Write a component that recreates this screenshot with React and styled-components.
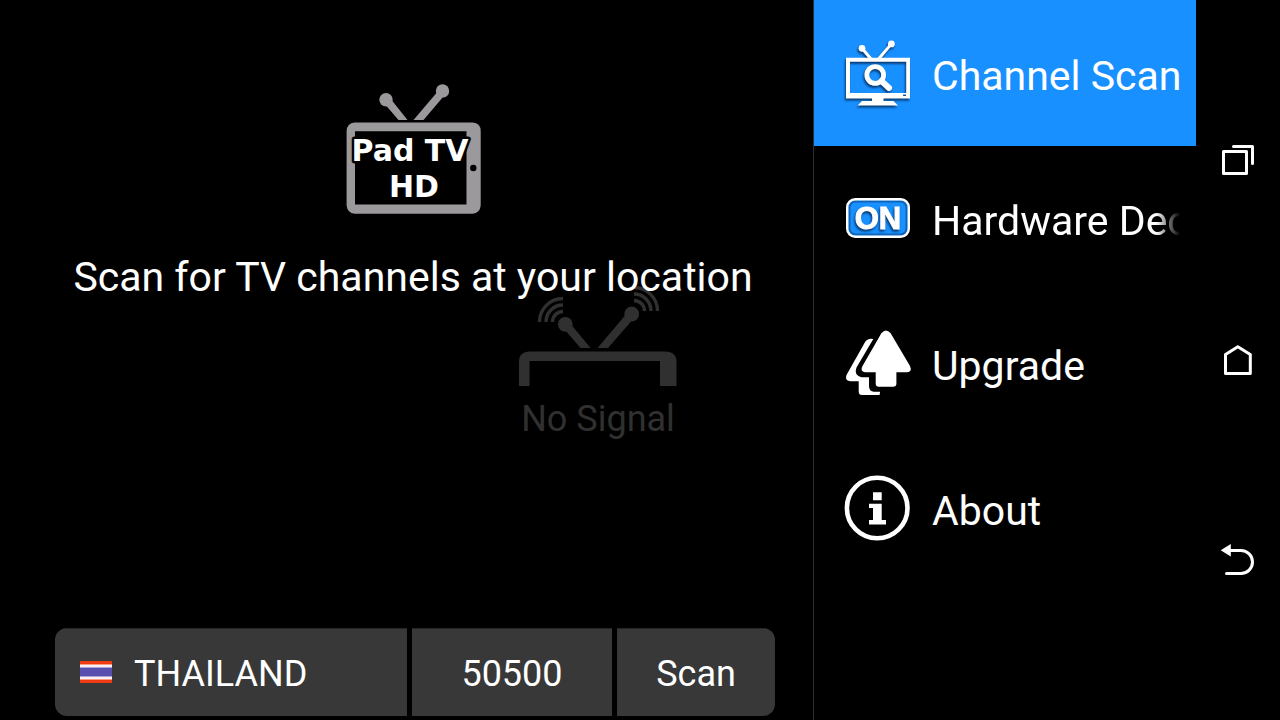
import React, { useState } from 'react';
import styled, { createGlobalStyle } from 'styled-components';

const GlobalStyle = createGlobalStyle`
    * {
        box-sizing: border-box;
    }

    body {
        margin: 0;
        background: #000;
        color: #fff;
        font-family: Roboto, 'Noto Sans', sans-serif;
    }

    button, input, select {
        margin: 0;
        border: none;
        color: inherit;
        font-family: inherit;
        outline: none;
    }
`;

const Screen = styled.div`
    display: flex;
    height: 100vh;
    overflow: hidden;
`;

const Content = styled.div`
    position: relative;
    display: flex;
    flex: 1;
    min-width: 0;
`;

const Backdrop = styled.div`
    position: absolute;
    inset: 0;
    display: flex;
    flex-direction: column;
    align-items: center;
    justify-content: center;
    gap: 12px;
    padding-top: 2px;
    color: #303030;
    font-size: 36px;
    line-height: 38px;
`;

const Main = styled.main`
    position: relative;
    display: flex;
    flex: 1;
    flex-direction: column;
    align-items: center;
    min-width: 0;
    padding: 84px 38px 4px 51px;
`;

const Title = styled.h1`
    margin: 39px 0 0;
    font-size: 41px;
    font-weight: 400;
    line-height: 48px;
    white-space: nowrap;
`;

const ScanForm = styled.form`
    display: flex;
    align-self: stretch;
    gap: 5px;
    height: 88px;
    margin: auto 0 0 4px;
    border-radius: 12px;
    overflow: hidden;
    font-size: 36px;
`;

const Country = styled.label`
    display: flex;
    flex: 1;
    align-items: center;
    gap: 22px;
    min-width: 0;
    padding: 0 25px;
    background: #383838;
    box-shadow: inset 0 1px #262626;
`;

const CountrySelect = styled.select`
    flex: 1;
    min-width: 0;
    height: 51px;
    padding: 3px 0 0;
    appearance: none;
    background: none;
    font-size: 36px;
`;

const PostCode = styled.input`
    width: 200px;
    padding: 3px 0 0;
    background: #383838;
    box-shadow: inset 0 1px #262626;
    font-size: 36px;
    text-align: center;
`;

const ScanButton = styled.button`
    width: 158px;
    padding: 3px 0 0;
    background: #383838;
    box-shadow: inset 0 1px #262626;
    font-size: 36px;
`;

const Menu = styled.nav`
    position: relative;
    width: 383px;
    border-left: 1px solid #2a2f2e;
`;

const MenuItem = styled.button`
    display: flex;
    align-items: center;
    gap: 21px;
    width: 100%;
    height: 146px;
    margin-bottom: -1px;
    padding: 0 16px 0 31px;
    background: ${props => props.$active ? '#1890ff' : 'transparent'};
    font-size: 41px;
    line-height: 48px;
    text-align: left;

    svg {
        flex: none;
        overflow: visible;
    }
`;

const MenuLabel = styled.span`
    flex: 1;
    min-width: 0;
    padding-top: 5px;
    overflow: hidden;
    white-space: nowrap;
    mask-image: ${props => props.$fade ? 'linear-gradient(to left, transparent, #000 24px)' : 'none'};
`;

const Shadowed = styled.g`
    filter: drop-shadow(-1px 2px 1px rgba(0, 20, 50, 0.7));
`;

const SystemBar = styled.div`
    display: flex;
    flex-direction: column;
    align-items: center;
    justify-content: space-around;
    width: 84px;
    padding: 60px 0;
`;

const SystemButton = styled.button`
    width: 40px;
    height: 40px;
    padding: 0;
    background: none;

    svg {
        display: block;
    }
`;

const NoSignalIcon = () => (
    <svg width="160" height="104" viewBox="0 0 160 104" fill="#303030">
        <path d="M1 102V78Q1 67.5 12 67.5H147Q158.5 67.5 158.5 78V102H142V77H11.5V102Z" />
        <circle cx="47.3" cy="40.3" r="7.4" />
        <circle cx="113.7" cy="30" r="7.4" />
        <path d="M44 42.5L62.5 64H72.5L51 38Z" />
        <path d="M110 28L79.5 64H90L117 33Z" />
        <g fill="none" stroke="#303030" strokeWidth="3.4">
            <path d="M21.5 38A23.5 23.5 0 0 1 45 14.5M28 38A17 17 0 0 1 45 21M34.5 38A10.5 10.5 0 0 1 45 27.5" />
            <path d="M116 3.5A23.5 23.5 0 0 1 139.5 27M116 10A17 17 0 0 1 133 27M116 16.5A10.5 10.5 0 0 1 126.5 27" />
        </g>
    </svg>
);

const Logo = () => (
    <svg width="135" height="130" viewBox="0 0 135 130">
        <g fill="#9c999c">
            <circle cx="40" cy="15.7" r="6.7" />
            <circle cx="96.5" cy="6.9" r="6.7" />
            <path d="M37 18L52.5 36H61.5L44 14Z" />
            <path d="M93 6L67.5 36H77.5L100 9.5Z" />
            <path
                fillRule="evenodd"
                d="M8.5 38.6H126.7Q134.7 39.5 134.7 47V121.5Q134 129 126.7 129.7H8.5Q1.3 129 .6 121.5V47Q1 39.5 8.5 38.6ZM9 47.3V120.5H120.5V47.3Z"
            />
        </g>
        <circle cx="127.3" cy="84" r="3.2" />
        <g
            fill="#fff"
            stroke="#000"
            strokeWidth="5"
            strokeLinejoin="round"
            paintOrder="stroke"
            fontFamily="DejaVu Sans, sans-serif"
            fontSize="30"
            fontWeight="700"
            textAnchor="middle"
        >
            <text x="64" y="77">Pad TV</text>
            <text x="68" y="113">HD</text>
        </g>
    </svg>
);

const ChannelScanIcon = () => (
    <svg width="66" height="66" viewBox="0 0 66 66">
        <Shadowed fill="#fff">
            <circle cx="17" cy="8.3" r="3.4" />
            <circle cx="46.4" cy="3.9" r="3.4" />
            <path d="M17 8.3L26 19M46.4 3.9L33.5 19" stroke="#fff" strokeWidth="3" />
            <path fillRule="evenodd" d="M1 17.7H65V58.5H1ZM5 21.8V53H61.2V21.8ZM58 54.5V56H61V54.5Z" />
            <path d="M27 58H38.5V61H48.5L53 65.5H12.5L17 61H27Z" />
            <circle cx="30.2" cy="35" r="8.4" fill="none" stroke="#fff" strokeWidth="4.8" />
            <path d="M36.5 41L44 48" stroke="#fff" strokeWidth="6" strokeLinecap="round" />
        </Shadowed>
    </svg>
);

const HardwareIcon = () => (
    <svg width="66" height="66" viewBox="0 0 66 66">
        <rect x="3" y="15" width="60" height="36" rx="7" fill="#1890ff" />
        <rect x="4.5" y="16.5" width="57" height="33" rx="6" fill="none" stroke="#1163b4" strokeWidth="2" />
        <rect x="2.2" y="14.2" width="61.6" height="37.6" rx="8" fill="none" stroke="#fff" strokeWidth="2.4" />
        <Shadowed fill="#fff" stroke="#fff" strokeWidth="1">
            <text
                x="33"
                y="44"
                fontFamily="Liberation Sans, sans-serif"
                fontSize="31"
                fontWeight="700"
                textAnchor="middle"
            >
                ON
            </text>
        </Shadowed>
    </svg>
);

const UpgradeIcon = () => (
    <svg width="66" height="66" viewBox="0 0 66 66" fill="#fff">
        <path d="M36.5 3Q41-2 45.5 3L65 36Q67.5 42 62 42.3H51.4V53.5Q51.4 56.8 48 56.8H34Q30.7 56.8 30.7 53.5V42.3H20Q14.500 41.5 17.5 36Z" />
        <path d="M28.3 9L11.5 37.5Q8.5 45 16.5 47.3H24V56Q24 61.5 29 61.7H35.2L34.5 65H17Q13.8 65 13.7 61.5V51.2H5Q-.7 50.500 1.5 45L19.8 12.5Q22.500 8 28.3 9Z" />
    </svg>
);

const AboutIcon = () => (
    <svg width="66" height="66" viewBox="0 0 66 66" fill="#fff">
        <circle cx="32.2" cy="33" r="30.3" fill="none" stroke="#fff" strokeWidth="4.6" />
        <path d="M28 17.3H36.7V25.2H28ZM24 28.7H36.7V45H41V49.4H24V45H28V33H24Z" />
    </svg>
);

const Flag = () => (
    <svg width="32" height="22" viewBox="0 0 32 22">
        <path fill="#f03a14" d="M0 0H32V22H0Z" />
        <path fill="#f99b86" d="M0 3H32V19H0Z" />
        <path fill="#fbeef0" d="M0 4H32V18H0Z" />
        <path fill="#a9a3d8" d="M0 6H32V16H0Z" />
        <path fill="#584eae" d="M0 7H32V15H0Z" />
    </svg>
);

const menuItems = [
    { label: 'Channel Scan', Icon: ChannelScanIcon },
    { label: 'Hardware Decoder', Icon: HardwareIcon, fade: true },
    { label: 'Upgrade', Icon: UpgradeIcon },
    { label: 'About', Icon: AboutIcon },
];

const systemButtons = [
    { name: 'Recent apps', shape: <path d="M5.5 11.5H28.5V33.5H5.5ZM15.5 6.5H34.5V23.5" /> },
    { name: 'Home', shape: <path d="M7.5 33.5V14.5L19.8 6.7L32.3 14.5V33.5Z" /> },
    {
        name: 'Back',
        shape: (
            <>
                <path d="M11 10.5H23A11.5 11.5 0 0 1 23 33.5H8.5" />
                <path d="M2.7 10.3L12.8 4V16.5Z" fill="#fff" stroke="none" />
            </>
        ),
    },
];

const App = () => {
    const [active, setActive] = useState('Channel Scan');
    const [postCode, setPostCode] = useState('50500');

    return (
        <Screen>
            <GlobalStyle />
            <Content>
                <Backdrop>
                    <NoSignalIcon />
                    <span>No Signal</span>
                </Backdrop>
                <Main>
                    <Logo />
                    <Title>Scan for TV channels at your location</Title>
                    <ScanForm onSubmit={e => e.preventDefault()}>
                        <Country>
                            <Flag />
                            <CountrySelect aria-label="Country">
                                <option>THAILAND</option>
                            </CountrySelect>
                        </Country>
                        <PostCode
                            aria-label="Post code"
                            value={postCode}
                            onChange={e => setPostCode(e.target.value)}
                        />
                        <ScanButton type="submit">Scan</ScanButton>
                    </ScanForm>
                </Main>
                <Menu>
                    {menuItems.map(({ label, Icon, fade }) => (
                        <MenuItem key={label} $active={label === active} onClick={() => setActive(label)}>
                            <Icon />
                            <MenuLabel $fade={fade}>{label}</MenuLabel>
                        </MenuItem>
                    ))}
                </Menu>
            </Content>
            <SystemBar>
                {systemButtons.map(({ name, shape }) => (
                    <SystemButton key={name} aria-label={name}>
                        <svg
                            width="40"
                            height="40"
                            viewBox="0 0 40 40"
                            fill="none"
                            stroke="#fff"
                            strokeWidth="3"
                            strokeLinecap="round"
                            strokeLinejoin="round"
                        >
                            {shape}
                        </svg>
                    </SystemButton>
                ))}
            </SystemBar>
        </Screen>
    );
};

export default App;
